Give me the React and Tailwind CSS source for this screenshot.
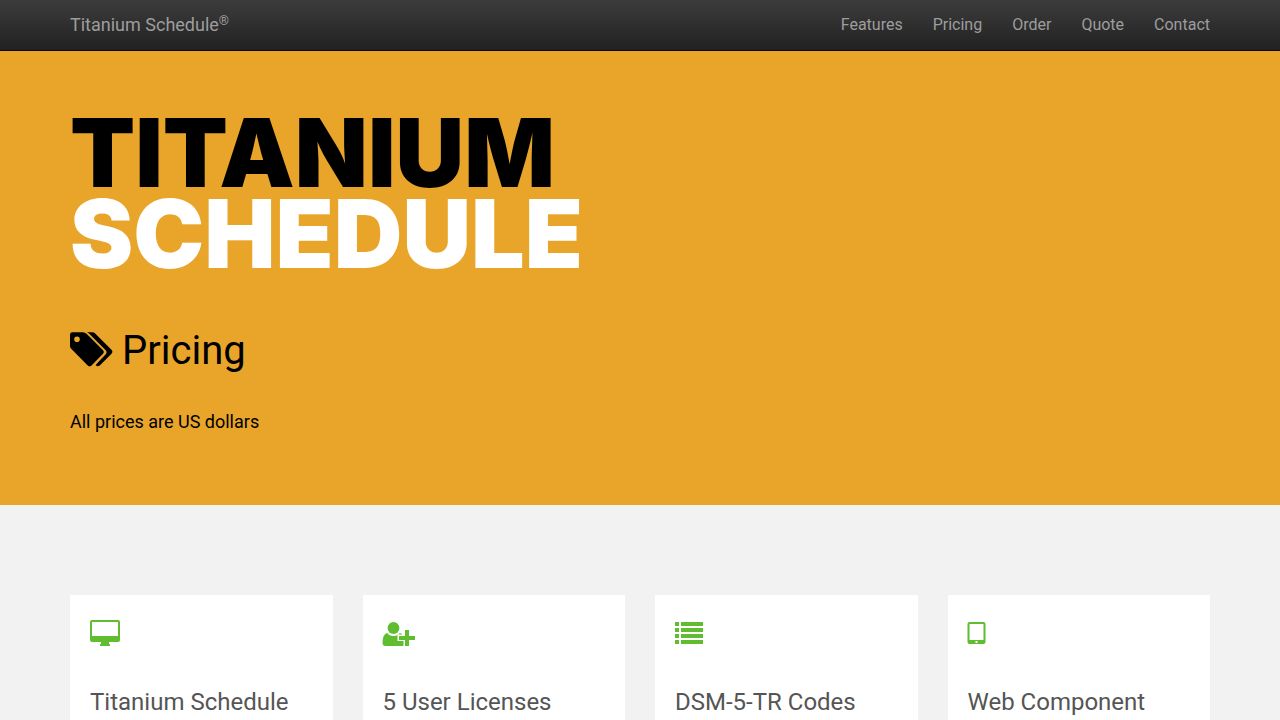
const navLinks = ['Features', 'Pricing', 'Order', 'Quote', 'Contact']

function TagsIcon() {
  return (
    <svg width="43" height="38" viewBox="0 0 43 38" fill="currentColor" aria-hidden="true">
      <path fillRule="evenodd" d="M2.5 0.3H13Q15 0.3 16.5 1.8L32.8 18Q34.8 20 32.8 22L21.5 33.4Q19.6 35.2 17.7 33.4L1.2 16.8Q0 15.6 0 14V3Q0 0.3 2.5 0.3ZM7 4.5A2.8 2.8 0 1 0 7 10.1A2.8 2.8 0 1 0 7 4.5Z" />
      <path d="M17 0.3H22.2Q24 0.3 25.4 1.7L41.5 17.8Q43.3 19.8 41.5 21.7L30 33.3Q28 35.2 26.1 33.6L25.6 33L35.5 22.5Q37.6 20.2 35.5 18L20 2.4Q18.8 1.2 17 0.3Z" />
    </svg>
  )
}

function MonitorIcon() {
  return (
    <svg width="30" height="26" viewBox="0 0 30 26" fill="currentColor" aria-hidden="true">
      <path fillRule="evenodd" d="M2 0H28Q30 0 30 2V20Q30 22 28 22H19V23.5L20 24.5V26H10V24.5L11 23.5V22H2Q0 22 0 20V2Q0 0 2 0ZM2 2V16H28V2Z" />
    </svg>
  )
}

function UserAddIcon() {
  return (
    <svg width="33" height="26" viewBox="0.5 0 33 26" fill="currentColor" className="overflow-visible" aria-hidden="true">
      <path d="M4.8 13Q6.6 16 11 16T17.2 13Q19 13.2 20 14.6H15V21H21V26H3Q0 26 0 23Q0 14 4.8 13Z" />
      <ellipse cx="11" cy="8" rx="5.9" ry="6.1" />
      <path d="M22.5 10H26.5V16H32.5V20H26.5V26H22.5V20H16.5V16H22.5Z" />
    </svg>
  )
}

function ListIcon() {
  return (
    <svg width="28" height="26" viewBox="0 0 28 26" fill="currentColor" aria-hidden="true">
      <path d="M0 2H4V6H0ZM6 2H28V6H6ZM0 8H4V12H0ZM6 8H28V12H6ZM0 14H4V18H0ZM6 14H28V18H6ZM0 20H4V24H0ZM6 20H28V24H6Z" />
    </svg>
  )
}

function TabletIcon() {
  return (
    <svg width="18" height="26" viewBox="0.5 0 18 26" fill="currentColor" className="overflow-visible" aria-hidden="true">
      <path fillRule="evenodd" d="M2 2H16Q18 2 18 4V22Q18 24 16 24H2Q0 24 0 22V4Q0 2 2 2ZM2 4V20H16V4ZM8 21V23H10V21Z" />
    </svg>
  )
}

const cards = [
  { title: 'Titanium Schedule', Icon: MonitorIcon },
  { title: '5 User Licenses', Icon: UserAddIcon },
  { title: 'DSM-5-TR Codes', Icon: ListIcon },
  { title: 'Web Component', Icon: TabletIcon },
]

export default function App() {
  return (
    <div className="min-h-screen bg-[#f2f2f2] font-['Roboto',sans-serif]">
      <header className="border-b border-[#080808] bg-linear-to-b from-[#3c3c3c] to-[#222222] text-[#9d9d9d]">
        <div className="mx-auto flex h-[50px] max-w-[1170px] items-center justify-between px-[15px]">
          <a href="#" className="text-lg leading-5">
            Titanium Schedule<sup className="text-[13px]">®</sup>
          </a>
          <nav className="flex gap-[30px] text-base leading-5">
            {navLinks.map((link) => (
              <a key={link} href="#" className="hover:text-white">{link}</a>
            ))}
          </nav>
        </div>
      </header>

      <section className="bg-[#e8a52a] text-black">
        <div className="mx-auto max-w-[1170px] px-[15px] pt-[61px] pb-[70px]">
          <h1 className="font-['Inter',sans-serif] text-[95px] leading-[81px] font-black">
            TITANIUM
            <span className="block text-white">SCHEDULE</span>
          </h1>
          <h2 className="mt-[55px] flex items-center gap-[9px] text-[40px] leading-[44px]">
            <TagsIcon />
            Pricing
          </h2>
          <p className="mt-[36px] text-lg leading-[26px]">All prices are US dollars</p>
        </div>
      </section>

      <main className="mx-auto max-w-[1170px] px-[15px] py-[90px]">
        <div className="grid grid-cols-4 gap-[30px]">
          {cards.map(({ title, Icon }) => (
            <article key={title} className="bg-white px-5 pt-[25px] pb-10">
              <div className="text-[#5fbd2f]">
                <Icon />
              </div>
              <h3 className="mt-[42px] text-2xl leading-[28px] text-[#555555]">{title}</h3>
            </article>
          ))}
        </div>
      </main>
    </div>
  )
}
